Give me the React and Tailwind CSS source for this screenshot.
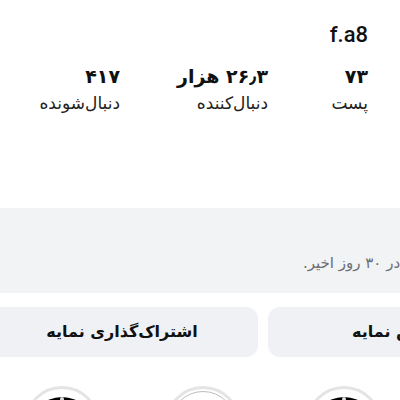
const fa = { fontFamily: '"DejaVu Sans", sans-serif' }

const Stat = ({ value, label, width }) => (
  <div className={`flex flex-col items-start ${width}`}>
    <span className="text-[19px] font-bold leading-[28px] text-[#111]">{value}</span>
    <span className="text-[17px] leading-[26px] text-[#222]">{label}</span>
  </div>
)

const Highlight = ({ dark }) => (
  <div className="h-[76px] w-[76px] shrink-0 rounded-full border-[3px] border-[#e4e4e4] p-[2px]">
    <div
      className={`relative h-full w-full rounded-full ${dark ? 'bg-black' : 'border border-[#bdbdbd] bg-white'}`}
    >
      {dark && <div className="mx-auto mt-[6px] h-[4px] w-[4px] rounded-full bg-[#ddd]" />}
    </div>
  </div>
)

export default function App() {
  return (
    <div className="h-[400px] w-[400px] overflow-hidden bg-white" style={fa}>
      <div dir="rtl" className="pr-[32px] pt-[22px]">
        <div dir="ltr" className="text-right text-[22px] font-medium leading-[26px] text-[#111]" style={{ fontFamily: 'Roboto, sans-serif' }}>
          f.a8
        </div>
        <div className="mt-[14px] flex">
          <Stat value="۷۳" label="پست" width="w-[100px]" />
          <Stat value="۲۶٫۳ هزار" label="دنبال‌کننده" width="w-[148px]" />
          <Stat value="۴۱۷" label="دنبال‌شونده" width="" />
        </div>
      </div>

      <div className="mt-[92px] h-[85px] w-[400px] bg-[#f2f3f5] pt-[44px]">
        <div className="flex pl-[303px]">
          <span dir="rtl" className="whitespace-nowrap text-[15px] text-[#6b6f75]">
            دسترسی به حساب‌ها در ۳۰ روز اخیر.
          </span>
        </div>
      </div>

      <div className="ml-[-14px] mt-[14px] flex w-[560px] gap-[10px]">
        <div dir="rtl" className="flex h-[50px] w-[272px] shrink-0 items-center justify-center rounded-[12px] bg-[#eff1f4] text-[16px] font-bold text-[#111]">
          اشتراک‌گذاری نمایه
        </div>
        <div dir="rtl" className="flex h-[50px] w-[272px] shrink-0 items-center justify-center rounded-[12px] bg-[#eff1f4] text-[16px] font-bold text-[#111]">
          ویرایش نمایه
        </div>
      </div>

      <div className="mt-[29px] flex gap-[65px] pl-[24px]">
        <Highlight dark />
        <Highlight />
        <Highlight dark />
      </div>
    </div>
  )
}
